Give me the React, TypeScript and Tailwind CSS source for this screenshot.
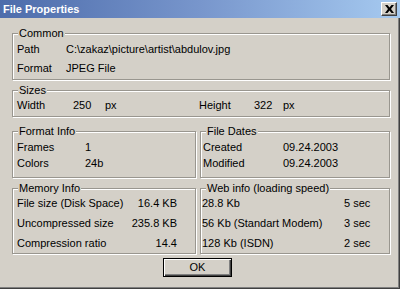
import type { ReactNode } from "react";

const Group = ({ title, className, children }: { title: string; className: string; children: ReactNode }) => (
  <fieldset
    className={
      "min-w-0 border border-[#99968f] shadow-[inset_1px_1px_0_#fff,1px_1px_0_#fff] " + className
    }
  >
    <legend className="ml-[5px] px-[1px] bg-[#d4d0c8] leading-[13px]">{title}</legend>
    {children}
  </fieldset>
);

const memory = [
  ["File size (Disk Space)", "16.4 KB"],
  ["Uncompressed size", "235.8 KB"],
  ["Compression ratio", "14.4"],
];

const web = [
  ["28.8 Kb", "5 sec"],
  ["56 Kb (Standart Modem)", "3 sec"],
  ["128 Kb (ISDN)", "2 sec"],
];

export default function App() {
  return (
    <div className="w-[400px] h-[289px] flex flex-col bg-[#d4d0c8] text-[11px] text-black font-['Tahoma','Liberation_Sans',sans-serif] shadow-[inset_-1px_-1px_0_#404040,inset_-2px_-2px_0_#808080]">
      {/* title bar */}
      <div className="h-[18px] flex items-center justify-between bg-gradient-to-r from-[#4d6cab] via-[#7896cc] to-[#a6caf0]">
        <span className="pl-[3px] font-bold text-white leading-none">File Properties</span>
        <button className="mr-[3px] w-[16px] h-[14px] flex items-center justify-center bg-[#d4d0c8] border border-t-white border-l-white border-r-[#404040] border-b-[#404040] shadow-[inset_-1px_-1px_0_#808080]">
          <svg width="9" height="8" viewBox="0 0 9 8">
            <path d="M0 0h2.5l2 2.5 2-2.5H9L6 4l3 4H6.5l-2-2.5-2 2.5H0l3-4z" fill="#000" />
          </svg>
        </button>
      </div>

      <div className="flex flex-col pl-[12px] pr-[10px] pt-[9px]">
        <Group title="Common" className="h-[53px]">
          <div className="flex items-center h-[18px] pl-[4px]">
            <span className="w-[49px]">Path</span>
            <span>C:\zakaz\picture\artist\abdulov.jpg</span>
          </div>
          <div className="flex items-center h-[20px] pl-[4px]">
            <span className="w-[49px]">Format</span>
            <span>JPEG File</span>
          </div>
        </Group>

        <Group title="Sizes" className="mt-[4px] h-[33px]">
          <div className="flex items-center h-[16px] pl-[4px]">
            <span className="w-[56px]">Width</span>
            <span className="w-[32px]">250</span>
            <span className="w-[94px]">px</span>
            <span className="w-[55px]">Height</span>
            <span className="w-[29px]">322</span>
            <span>px</span>
          </div>
        </Group>

        <div className="mt-[8px] flex gap-[4px]">
          <Group title="Format Info" className="w-[184px] h-[53px]">
            <div className="pt-[1px] pl-[4px]">
              <div className="flex items-center h-[16px]">
                <span className="w-[68px]">Frames</span>
                <span>1</span>
              </div>
              <div className="flex items-center h-[16px]">
                <span className="w-[68px]">Colors</span>
                <span>24b</span>
              </div>
            </div>
          </Group>
          <Group title="File Dates" className="flex-1 h-[53px]">
            <div className="pt-[1px] pl-[2px]">
              <div className="flex items-center h-[16px]">
                <span className="w-[80px]">Created</span>
                <span>09.24.2003</span>
              </div>
              <div className="flex items-center h-[16px]">
                <span className="w-[80px]">Modified</span>
                <span>09.24.2003</span>
              </div>
            </div>
          </Group>
        </div>

        <div className="mt-[4px] flex gap-[4px]">
          <Group title="Memory Info" className="w-[184px] h-[72px]">
            <div className="flex flex-col gap-[4px] pl-[4px] pr-[18px]">
              {memory.map(([k, v]) => (
                <div key={k} className="flex items-center justify-between h-[16px]">
                  <span>{k}</span>
                  <span>{v}</span>
                </div>
              ))}
            </div>
          </Group>
          <Group title="Web info (loading speed)" className="flex-1 h-[72px]">
            <div className="flex flex-col gap-[4px] pl-[1px]">
              {web.map(([k, v]) => (
                <div key={k} className="flex items-center h-[16px]">
                  <span className="w-[142px]">{k}</span>
                  <span>{v}</span>
                </div>
              ))}
            </div>
          </Group>
        </div>

        <button className="mt-[4px] ml-[151px] w-[69px] h-[19px] flex items-center justify-center bg-[#d4d0c8] border border-black shadow-[inset_1px_1px_0_#fff,inset_-1px_-1px_0_#404040,inset_-2px_-2px_0_#808080]">
          OK
        </button>
      </div>
    </div>
  );
}
